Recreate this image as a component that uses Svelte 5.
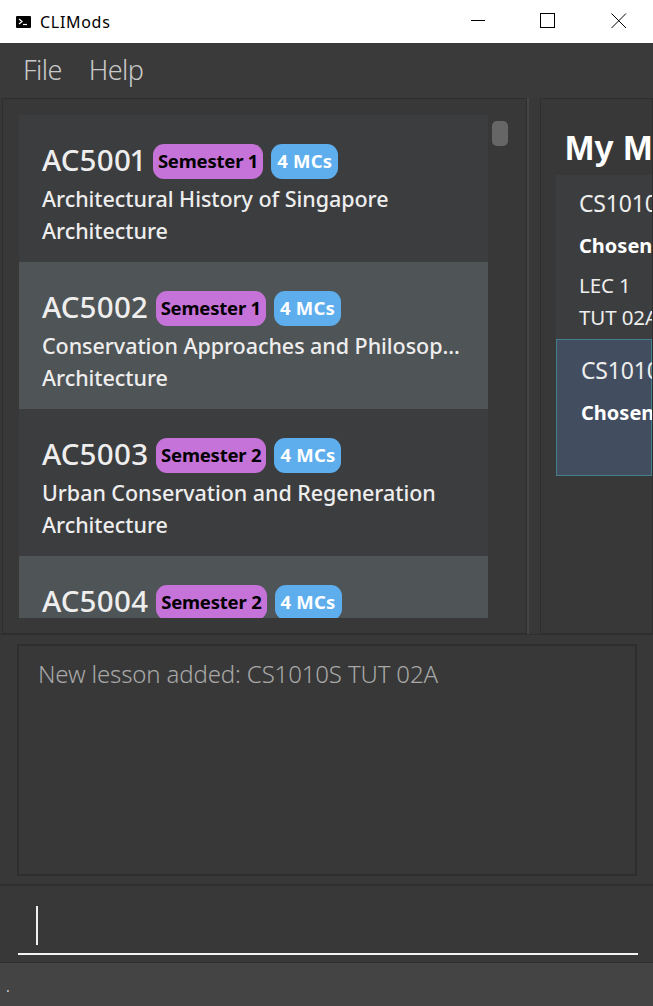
<script>
    const modules = [
        { code: 'AC5001', sem: 'Semester 1', title: 'Architectural History of Singapore', dept: 'Architecture' },
        { code: 'AC5002', sem: 'Semester 1', title: 'Conservation Approaches and Philosop...', dept: 'Architecture' },
        { code: 'AC5003', sem: 'Semester 2', title: 'Urban Conservation and Regeneration', dept: 'Architecture' },
        { code: 'AC5004', sem: 'Semester 2' }
    ];
</script>

<div class="window">
    <header class="titlebar">
        <svg class="app-icon" width="16" height="14" viewBox="0 0 16 14">
            <rect x="0" y="1" width="15" height="12" rx="1" fill="#000" />
            <path d="M3 4l3 2.5L3 9" fill="none" stroke="#fff" stroke-width="1.2" />
            <path d="M7 9.5h4" stroke="#fff" stroke-width="1.2" />
        </svg>
        <span class="app-name">CLIMods</span>
        <div class="controls">
            <svg width="16" height="16" viewBox="0 0 16 16"><path d="M2 7.5h14" stroke="#000" /></svg>
            <svg width="16" height="16" viewBox="0 0 16 16"><rect x="0.5" y="0.5" width="14" height="14" fill="none" stroke="#000" /></svg>
            <svg width="16" height="16" viewBox="0 0 16 16"><path d="M0.5 0.5l14.5 14.5M15 0.5l-14.5 14.5" stroke="#000" /></svg>
        </div>
    </header>

    <nav class="menubar">
        <span>File</span>
        <span>Help</span>
    </nav>

    <div class="panes">
        <section class="pane left">
            <div class="list">
                {#each modules as m, i}
                    <article class="row" class:alt={i % 2 === 1}>
                        <div class="head">
                            <span class="code">{m.code}</span>
                            <span class="tag sem">{m.sem}</span>
                            <span class="tag mcs">4 MCs</span>
                        </div>
                        {#if m.title}
                            <div class="line">{m.title}</div>
                            <div class="line">{m.dept}</div>
                        {/if}
                    </article>
                {/each}
            </div>
            <div class="thumb"></div>
        </section>
        <div class="divider"></div>
        <section class="pane right">
            <h1>My Modules</h1>
            <article class="card">
                <div class="card-code">CS1010S</div>
                <div class="chosen">Chosen Lessons:</div>
                <div class="lesson first">LEC 1</div>
                <div class="lesson">TUT 02A</div>
            </article>
            <article class="card selected">
                <div class="card-code">CS1010E</div>
                <div class="chosen">Chosen Lessons:</div>
            </article>
        </section>
    </div>

    <section class="result">
        <div class="result-box">New lesson added: CS1010S TUT 02A</div>
    </section>

    <section class="command">
        <div class="input"><span class="caret"></span></div>
    </section>

    <footer class="status">.</footer>
</div>

<style>
    :global(body) {
        margin: 0;
        background: #383838;
        overflow: hidden;
    }

    .window {
        width: 653px;
        height: 1006px;
        overflow: hidden;
        display: flex;
        flex-direction: column;
        font-family: "Noto Sans", "Open Sans", sans-serif;
        background: #383838;
    }

    .titlebar {
        height: 43px;
        flex: none;
        background: #fff;
        display: flex;
        align-items: center;
        padding-left: 16px;
        box-sizing: border-box;
    }

    .app-icon {
        margin-right: 8px;
    }

    .app-name {
        font-size: 16px;
        color: #000;
        letter-spacing: 0.7px;
    }

    .controls {
        margin-left: auto;
        margin-bottom: 2px;
        display: flex;
        gap: 55px;
        padding-right: 26px;
    }

    .menubar {
        height: 55px;
        flex: none;
        box-sizing: border-box;
        display: flex;
        align-items: center;
        gap: 27px;
        padding: 0 0 3px 23px;
        background: #3a3a3a;
        color: #c9c9c9;
        font-size: 27px;
        font-weight: 300;
        letter-spacing: -0.6px;
    }

    .panes {
        height: 537px;
        flex: none;
        display: flex;
        padding-left: 2px;
        border-bottom: 1px solid #2f2f2f;
        box-sizing: border-box;
    }

    .pane {
        position: relative;
        box-sizing: border-box;
        border: 1px solid #2e2e2e;
        overflow: hidden;
    }

    .left {
        width: 525px;
        flex: none;
        padding: 16px 0 15px 16px;
    }

    .list {
        width: 469px;
        height: 503px;
        overflow: hidden;
    }

    .row {
        height: 147px;
        box-sizing: border-box;
        padding: 26px 0 0 23px;
        background: #3c3d3f;
        color: #eee;
    }

    .row.alt {
        background: #4f5456;
    }

    .head {
        display: flex;
        align-items: center;
        height: 40px;
        margin-bottom: 2px;
        white-space: nowrap;
    }

    .code {
        font-size: 29.5px;
        line-height: 36px;
        font-weight: 500;
        font-variant-numeric: proportional-nums;
        margin-top: -2px;
        margin-right: 8px;
    }

    .tag {
        font-size: 18.5px;
        font-weight: 700;
        height: 35px;
        line-height: 34px;
        border-radius: 11px;
        padding: 0 5px;
        box-sizing: border-box;
        letter-spacing: -0.2px;
    }

    .sem {
        background: #c673d9;
        color: #000;
        margin-right: 8px;
    }

    .mcs {
        background: #5eaeee;
        color: #fff;
        padding: 0 6px;
        letter-spacing: 0.2px;
    }

    .line {
        font-size: 21.5px;
        line-height: 32px;
        letter-spacing: -0.05px;
        font-weight: 500;
        white-space: nowrap;
    }

    .thumb {
        position: absolute;
        left: 489px;
        top: 22px;
        width: 16px;
        height: 25px;
        border-radius: 5px;
        background: #666;
    }

    .divider {
        width: 13px;
        flex: none;
        box-sizing: border-box;
        border-left: 2px solid #454545;
    }

    .right {
        flex: 1;
        min-width: 0;
        padding: 27px 0 0 15px;
    }

    h1 {
        margin: 0;
        height: 49px;
        padding-left: 9px;
        font-family: "Liberation Sans", Arial, sans-serif;
        font-size: 35px;
        line-height: 44px;
        font-weight: 700;
        color: #fff;
        white-space: nowrap;
    }

    .card {
        height: 164px;
        box-sizing: border-box;
        padding: 10px 0 0 23px;
        background: #3c3d3f;
        color: #eee;
        white-space: nowrap;
    }

    .card.selected {
        height: 137px;
        padding: 12px 0 0 24px;
        background: #424d5f;
        border: 1px solid #41808f;
    }

    .card-code {
        font-size: 23px;
        line-height: 36px;
        letter-spacing: -0.2px;
    }

    .chosen {
        margin-top: 7px;
        font-size: 20px;
        line-height: 36px;
        font-weight: 700;
        color: #fff;
    }

    .lesson {
        font-size: 20.5px;
        line-height: 32px;
        letter-spacing: -0.1px;
    }

    .lesson.first {
        margin-top: 5px;
    }

    .result {
        height: 251px;
        flex: none;
        box-sizing: border-box;
        padding: 9px 16px 8px 17px;
        border-bottom: 2px solid #2f2f2f;
    }

    .result-box {
        height: 100%;
        box-sizing: border-box;
        border: 2px solid #2e2e2e;
        padding: 10px 0 0 19px;
        font-size: 24px;
        line-height: 36px;
        font-weight: 300;
        color: #a8a8a8;
        letter-spacing: -0.15px;
        white-space: nowrap;
    }

    .command {
        height: 77px;
        flex: none;
        box-sizing: border-box;
        padding-left: 18px;
        border-bottom: 1px solid #2f2f2f;
    }

    .input {
        width: 620px;
        height: 69px;
        box-sizing: border-box;
        border-bottom: 2px solid #f2f2f2;
        padding: 20px 0 0 18px;
    }

    .caret {
        display: block;
        width: 2px;
        height: 39px;
        background: #f0f0f0;
    }

    .status {
        flex: 1;
        background: #444;
        color: #d0d0d0;
        font-size: 14px;
        padding: 14px 0 0 6px;
    }
</style>
